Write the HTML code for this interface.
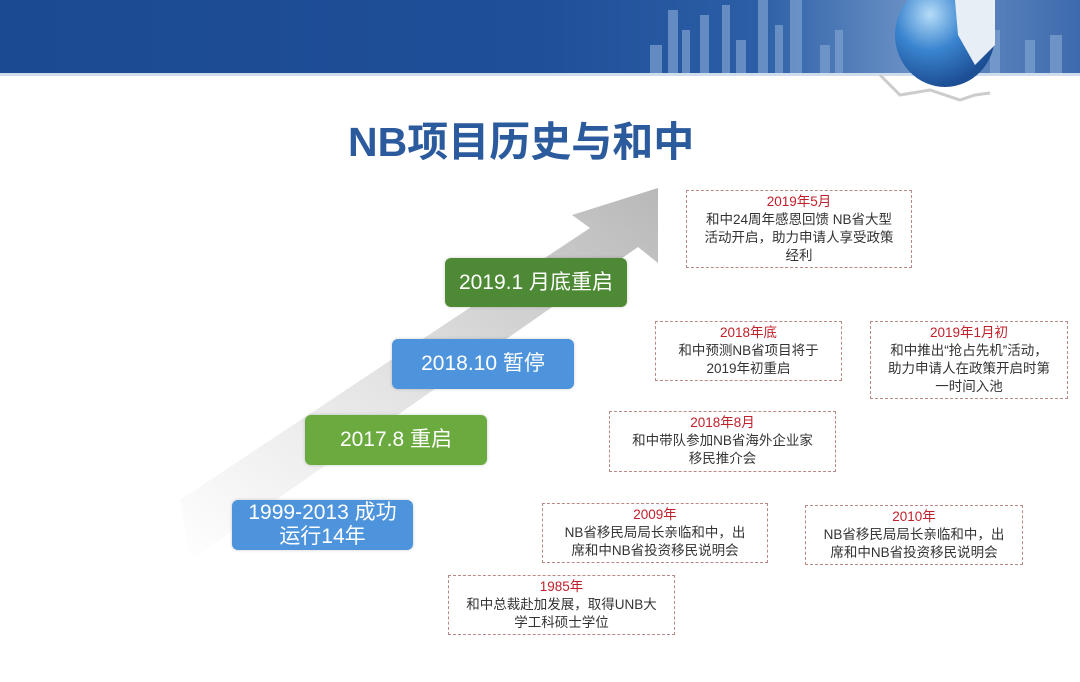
<!DOCTYPE html>
<html><head><meta charset="utf-8"><style>
body{margin:0;width:1080px;height:682px;overflow:hidden;background:#fff;position:relative;font-family:"Liberation Sans","Noto Sans CJK SC",sans-serif}
.hdr{position:absolute;left:0;top:0;width:1080px;height:73px;background:linear-gradient(90deg,#1b4a92 0%,#1f4f98 50%,#2b5ea6 70%,#6d93c6 85%,#3d6aae 100%)}
.line{position:absolute;left:0;top:73px;width:1080px;height:3px;background:#cfdcec}
.title{position:absolute;left:348px;top:108px;font-size:41px;font-weight:bold;color:#2b5a9d;white-space:nowrap}
.b{position:absolute;color:#fff;border-radius:6px;display:flex;align-items:center;justify-content:center;text-align:center;font-size:21px;line-height:24px;box-shadow:0 0 3px rgba(0,0,0,.2)}
.g{background:#6aaa3f}.g2{background:#4e8a35}.bl{background:#4d94dc}
.d{position:absolute;border:1px dashed #b88;text-align:center;font-size:13.5px;line-height:18px;color:#333;box-sizing:border-box;padding-top:2px}
.d b{display:block;font-weight:normal;color:#c0202a}
</style></head><body>
<div class="hdr">
<svg width="1080" height="73" style="position:absolute;left:0;top:0">
<g fill="#7fa2d0" opacity=".7">
<rect x="650" y="45" width="12" height="28"/><rect x="668" y="10" width="10" height="63"/><rect x="682" y="30" width="8" height="43"/><rect x="700" y="15" width="9" height="58"/><rect x="722" y="5" width="8" height="68"/><rect x="736" y="40" width="10" height="33"/><rect x="758" y="0" width="10" height="73"/><rect x="775" y="25" width="8" height="48"/><rect x="790" y="0" width="12" height="73"/><rect x="820" y="45" width="10" height="28"/><rect x="835" y="30" width="8" height="43"/><rect x="990" y="30" width="10" height="43"/><rect x="1025" y="40" width="10" height="33"/><rect x="1050" y="35" width="12" height="38"/>
</g>
</svg>
</div>
<div class="line"></div>
<svg width="1080" height="682" style="position:absolute;left:0;top:0">
<defs><linearGradient id="ag" x1="0" y1="1" x2="1" y2="0"><stop offset="0" stop-color="#fff"/><stop offset=".45" stop-color="#e4e4e4"/><stop offset="1" stop-color="#b8b8b8"/></linearGradient>
<radialGradient id="gl" cx=".35" cy=".3" r=".7"><stop offset="0" stop-color="#b5dcf8"/><stop offset=".5" stop-color="#3a84cf"/><stop offset="1" stop-color="#1d4f95"/></radialGradient></defs>
<path d="M180 500 L590 228 L572 215 L658 188 L658 263 L638 247 L190 560 Z" fill="url(#ag)"/>
<ellipse cx="945" cy="35" rx="50" ry="52" fill="url(#gl)"/>
<path d="M955 0 L995 0 L995 45 L975 65 L958 35 Z" fill="#e8eef5"/>
<path d="M880 75 L900 95 L930 90 L960 100 L975 95 L990 93" stroke="#ccc" stroke-width="3" fill="none"/>
</svg>
<div class="title">NB项目历史与和中</div>
<div class="b g2" style="left:445px;top:258px;width:182px;height:49px">2019.1 月底重启</div>
<div class="b bl" style="left:392px;top:339px;width:182px;height:50px">2018.10 暂停</div>
<div class="b g" style="left:305px;top:415px;width:182px;height:50px">2017.8 重启</div>
<div class="b bl" style="left:232px;top:500px;width:181px;height:50px">1999-2013 成功<br>运行14年</div>
<div class="d" style="left:686px;top:190px;width:226px;height:78px"><b>2019年5月</b>和中24周年感恩回馈 NB省大型<br>活动开启，助力申请人享受政策<br>经利</div>
<div class="d" style="left:655px;top:321px;width:187px;height:60px"><b>2018年底</b>和中预测NB省项目将于<br>2019年初重启</div>
<div class="d" style="left:870px;top:321px;width:198px;height:78px"><b>2019年1月初</b>和中推出“抢占先机”活动，<br>助力申请人在政策开启时第<br>一时间入池</div>
<div class="d" style="left:609px;top:411px;width:227px;height:61px"><b>2018年8月</b>和中带队参加NB省海外企业家<br>移民推介会</div>
<div class="d" style="left:542px;top:503px;width:226px;height:60px"><b>2009年</b>NB省移民局局长亲临和中，出<br>席和中NB省投资移民说明会</div>
<div class="d" style="left:805px;top:505px;width:218px;height:60px"><b>2010年</b>NB省移民局局长亲临和中，出<br>席和中NB省投资移民说明会</div>
<div class="d" style="left:448px;top:575px;width:227px;height:60px"><b>1985年</b>和中总裁赴加发展，取得UNB大<br>学工科硕士学位</div>
</body></html>
